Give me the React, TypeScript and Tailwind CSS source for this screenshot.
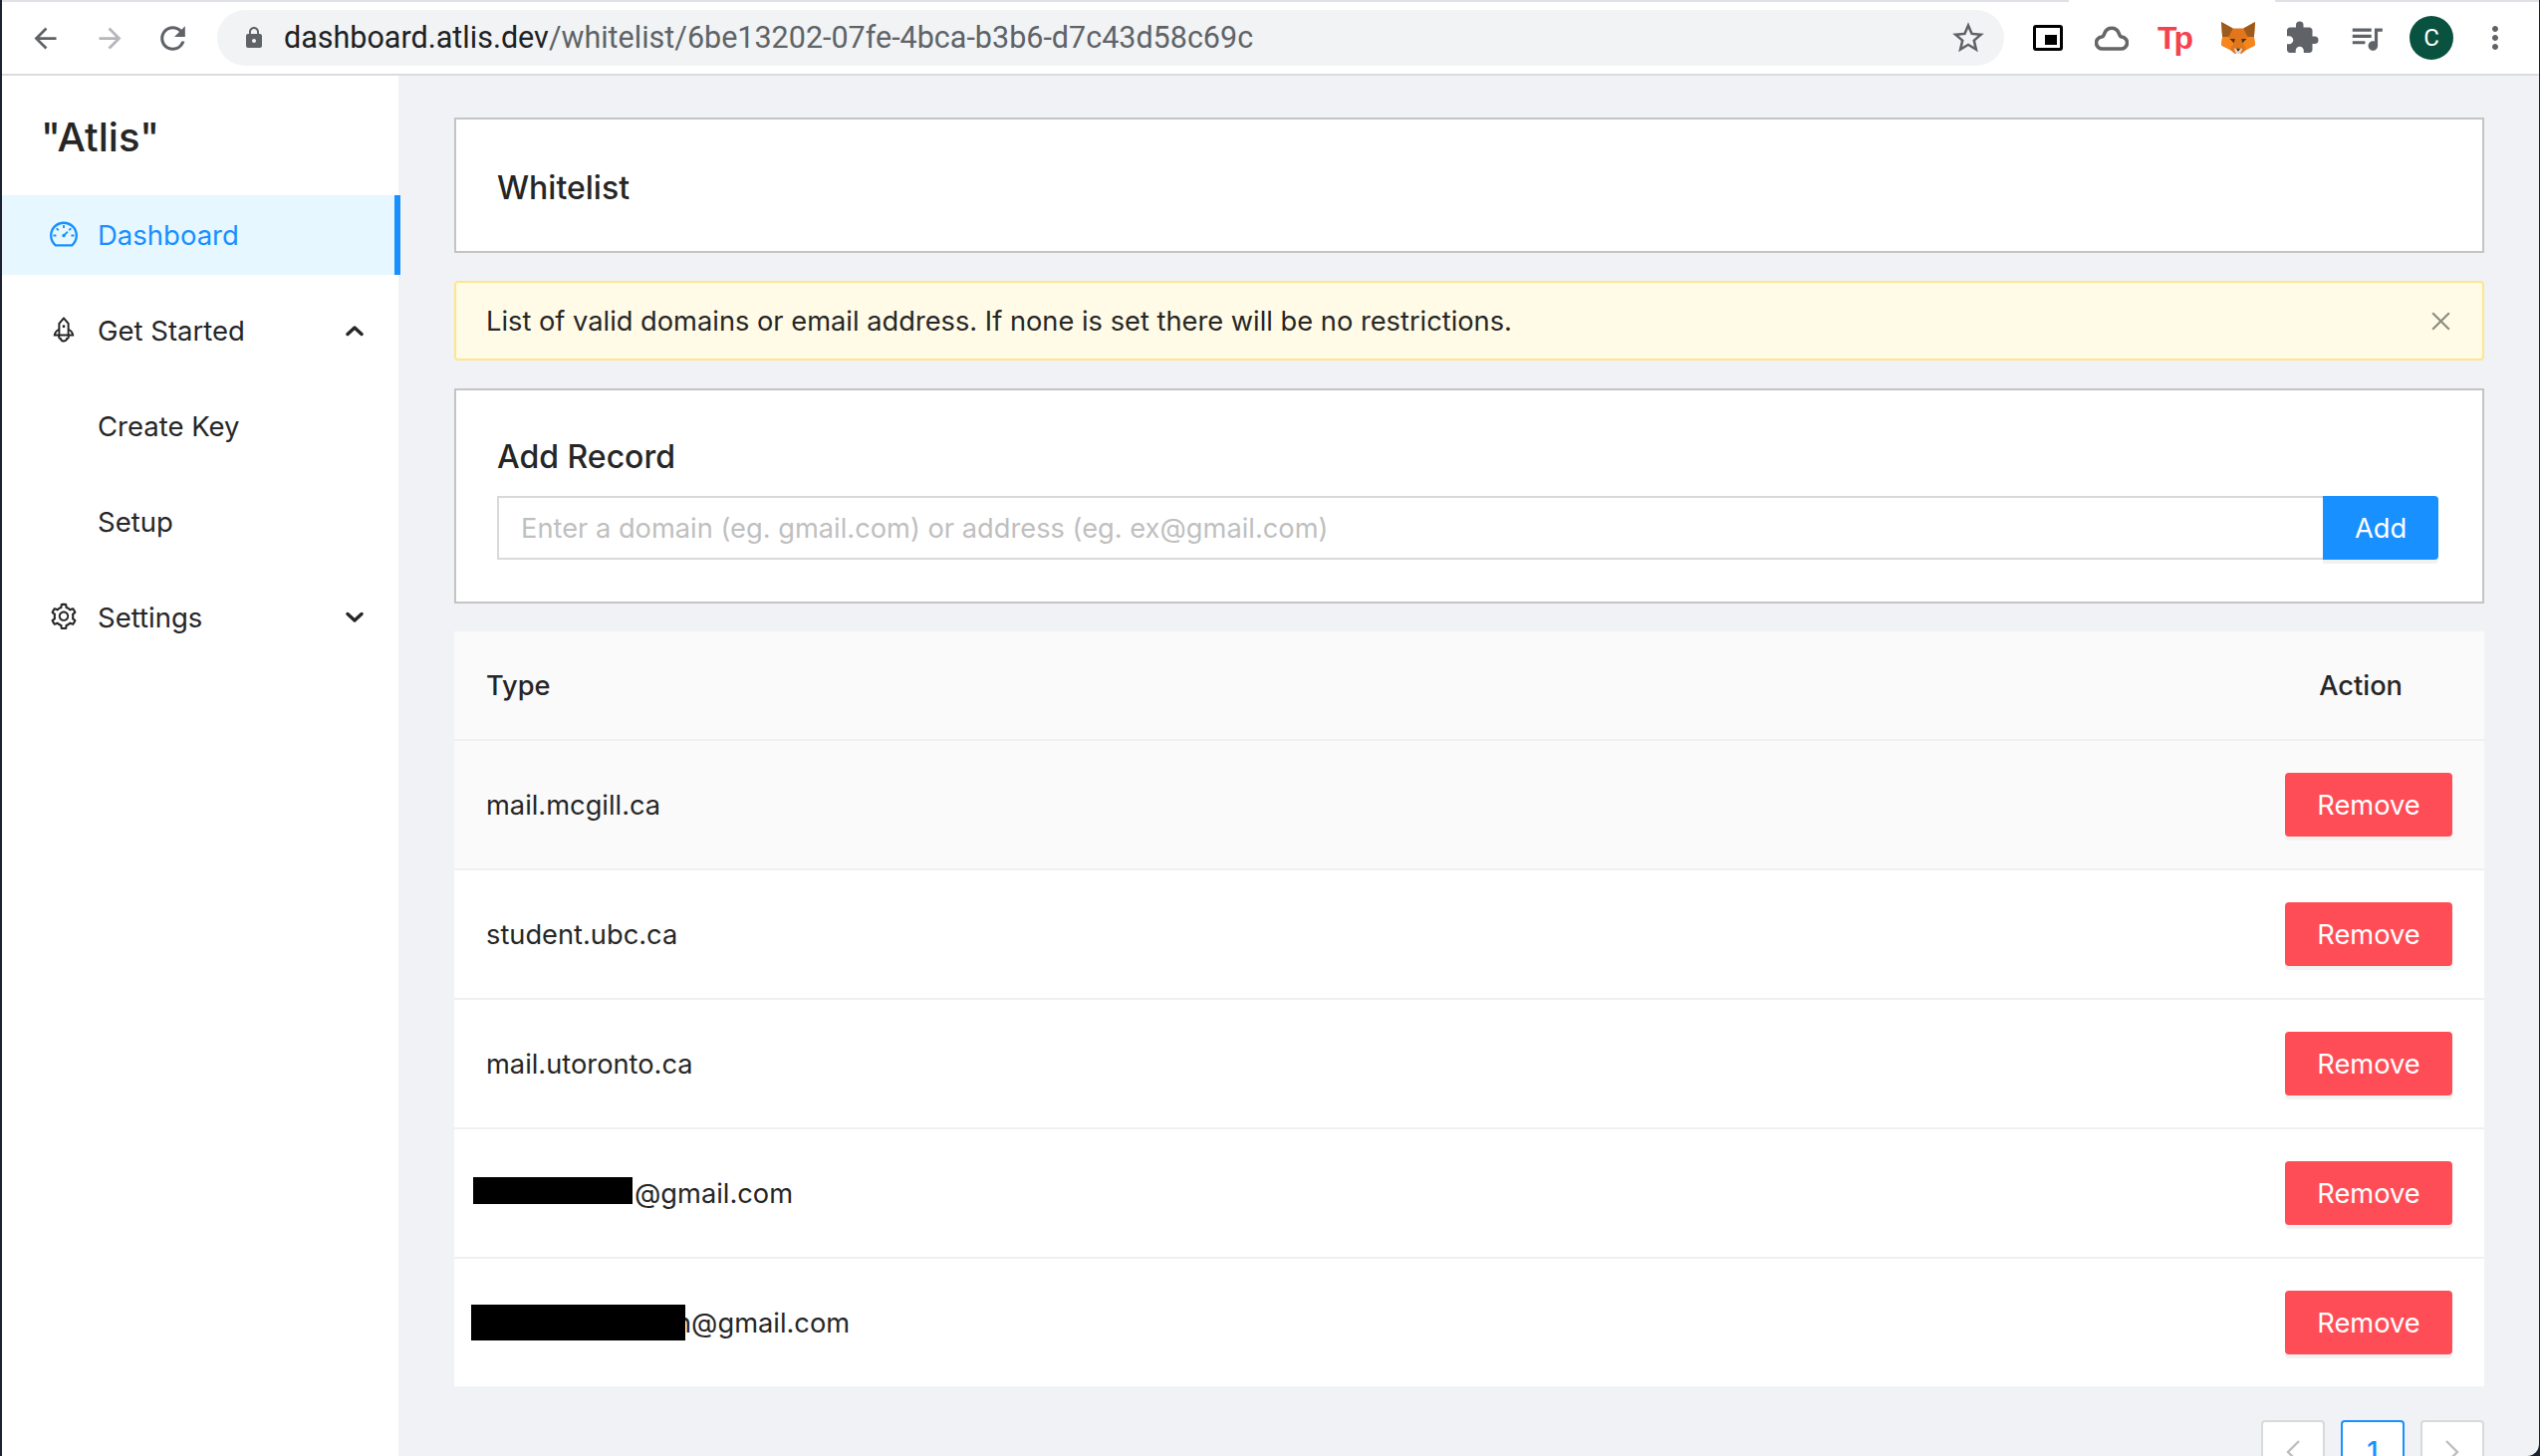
import React from "react";
import { AiOutlineDashboard, AiOutlineRocket, AiOutlineSetting, AiOutlineClose } from "react-icons/ai";
import { MdArrowBack, MdArrowForward, MdRefresh, MdLock, MdStarBorder, MdExtension, MdQueueMusic, MdMoreVert } from "react-icons/md";

const records = ["mail.mcgill.ca", "student.ubc.ca", "mail.utoronto.ca"];

function Chevron({ up }: { up?: boolean }) {
  return (
    <svg width="18" height="12" viewBox="0 0 18 12" className="ml-auto mr-[35px]" fill="none" stroke="#262626" strokeWidth="3.4" strokeLinecap="round" strokeLinejoin="round">
      <path d={up ? "M2 9.5 9 3l7 6.5" : "M2 2.5 9 9l7-6.5"} />
    </svg>
  );
}

function Fox() {
  return (
    <svg width="34" height="32" viewBox="0 0 32 30">
      <polygon points="0,0 11,6 21,6 32,0 31,14 32,22 24,26 19,30 13,30 8,26 0,22 1,14" fill="#e2761b" />
      <polygon points="0,0 11,6 7,14 1,14" fill="#9c5a1e" />
      <polygon points="32,0 21,6 25,14 31,14" fill="#9c5a1e" />
      <polygon points="1,14 7,14 12,20 8,26 0,22" fill="#f6851b" />
      <polygon points="31,14 25,14 20,20 24,26 32,22" fill="#f6851b" />
      <polygon points="8,16 13,16 12,20" fill="#4a3320" />
      <polygon points="24,16 19,16 20,20" fill="#4a3320" />
      <polygon points="12,25 20,25 18,30 14,30" fill="#e4d7c6" />
      <polygon points="14,25 18,25 16,28" fill="#2d2d2d" />
    </svg>
  );
}

function Toolbar() {
  return (
    <header className="h-[76px] shrink-0 bg-white border-b-2 border-[#dadce0] flex items-center relative pt-[2px]">
      <div className="absolute top-0 left-0 h-[2px] w-[2075px] bg-[#dee1e6]" />
      <div className="absolute top-0 right-0 h-[2px] w-[265px] bg-[#dee1e6]" />
      <div className="flex items-center w-[216px] pl-[27px] text-[#5f6368]">
        <MdArrowBack size={33} />
        <MdArrowForward size={33} className="ml-[32px] text-[#b4b6b9]" />
        <MdRefresh size={37} className="ml-[28px]" />
      </div>
      <div className="w-[1794px] h-[56px] rounded-full bg-[#f1f3f4] flex items-center pl-[25px] pr-[17px]">
        <MdLock size={24} className="text-[#5f6368]" />
        <span className="ml-[18px] text-[30.5px] text-[#5f6368] whitespace-nowrap font-['Roboto',sans-serif]">
          <span className="text-[#202124]">dashboard.atlis.dev</span>/whitelist/6be13202-07fe-4bca-b3b6-d7c43d58c69c
        </span>
        <MdStarBorder size={38} className="ml-auto text-[#5f6368]" />
      </div>
      <div className="flex items-center flex-1 pl-[29px]">
        <div className="w-[30px] h-[26px] border-[3px] border-black rounded-[3px] flex items-end justify-end p-[3px]">
          <div className="w-[12px] h-[10px] bg-black" />
        </div>
        <svg width="34" height="28" viewBox="0 0 34 28" className="ml-[32px]" fill="none" stroke="#666" strokeWidth="3.6">
          <path d="M10 25H8a6 6 0 0 1-1-12c1 0 2-1 3-4a7.500 7.500 0 0 1 14 0c1 3 2 4 3 4a6 6 0 0 1-1 12z" strokeLinejoin="round" />
        </svg>
        <span className="ml-[29px] w-[36px] text-[32px] font-black text-[#f4434f] tracking-[-3px] leading-none font-['Liberation_Sans',sans-serif]">Tp</span>
        <span className="ml-[28px] block"><Fox /></span>
        <MdExtension size={36} className="ml-[29px] text-[#5f6368]" />
        <MdQueueMusic size={38} className="ml-[28px] text-[#5f6368]" />
        <div className="ml-[24px] w-[44px] h-[44px] rounded-full bg-[#0a5240] flex items-center justify-center text-white text-[24px] font-['Roboto',sans-serif]">C</div>
        <MdMoreVert size={36} className="ml-[24px] text-[#5f6368]" />
      </div>
    </header>
  );
}

function Sidebar() {
  return (
    <aside className="w-[398px] shrink-0 bg-white">
      <div className="h-[120px] pl-[39px] flex items-center text-[40px] font-medium text-[#262626] pt-[4px]">"Atlis"</div>
      <nav className="flex flex-col text-[27.5px] text-[#262626]">
        <div className="h-[80px] w-[400px] bg-[#e6f7ff] border-r-[6px] border-[#1890ff] flex items-center pl-[46px] text-[#1890ff]">
          <AiOutlineDashboard size={32} className="-translate-y-[1px]" />
          <span className="ml-[18px] pt-[2px]">Dashboard</span>
        </div>
        <div className="h-[80px] mt-[16px] flex items-center pl-[48px]">
          <AiOutlineRocket size={30} className="-translate-y-[1px] -ml-[1px]" />
          <span className="ml-[19px] pt-[2px]">Get Started</span>
          <Chevron up />
        </div>
        <div className="h-[80px] mt-[16px] flex items-center pl-[96px] pt-[2px]">Create Key</div>
        <div className="h-[80px] mt-[16px] flex items-center pl-[96px] pt-[2px]">Setup</div>
        <div className="h-[80px] mt-[16px] flex items-center pl-[47px]">
          <AiOutlineSetting size={30} className="-translate-y-[1px]" />
          <span className="ml-[19px] pt-[2px]">Settings</span>
          <Chevron />
        </div>
      </nav>
    </aside>
  );
}

function RemoveButton() {
  return (
    <button className="ml-auto w-[168px] h-[64px] pt-[2px] rounded-[4px] bg-[#ff4d57] text-white text-[27.25px] shadow-[0_4px_0_#f2f2f2]">Remove</button>
  );
}

function Row({ children, hover }: { children: React.ReactNode; hover?: boolean }) {
  return (
    <div className={`h-[130px] last:h-[128px] flex items-center pl-[32px] pr-[32px] border-b-2 border-[#f0f0f0] last:border-b-0 text-[27.25px] text-[#262626] ${hover ? "bg-[#fafafa]" : ""}`}>
      {children}
    </div>
  );
}

function PageArrow({ left }: { left?: boolean }) {
  return (
    <div className="w-[64px] h-[64px] bg-white border-2 border-[#d9d9d9] rounded-[4px] flex items-center justify-center">
      <svg width="14" height="24" viewBox="0 0 14 24" fill="none" stroke="#bfbfbf" strokeWidth="2.4">
        <path d={left ? "M13 1 2 12l11 11" : "M1 1l11 11L1 23"} />
      </svg>
    </div>
  );
}

export default function App() {
  return (
    <div className="w-[2550px] h-[1462px] overflow-hidden bg-[#1b2233] font-['Inter',sans-serif]">
      <div className="h-full ml-[2px] mr-[1px] rounded-br-[12px] overflow-hidden flex flex-col bg-[#f0f2f5]">
        <Toolbar />
        <div className="flex flex-1 min-h-0">
          <Sidebar />
          <main className="flex-1 pl-[56px] pr-[55px] pt-[42px] flex flex-col">
            <section className="h-[136px] shrink-0 bg-white border-2 border-[#c4c4c4] flex items-center pl-[41px] pt-[6px] text-[32px] font-medium text-[#262626]">Whitelist</section>
            <div className="mt-[28px] h-[80px] shrink-0 bg-[#fffbe6] border-2 border-[#ffe58f] rounded-[4px] flex items-center pl-[30px] pr-[32px] text-[27.25px] text-[#262626]">
              <span className="pt-[2px]">List of valid domains or email address. If none is set there will be no restrictions.</span>
              <AiOutlineClose size={27} className="ml-auto -mr-[4px] text-[#8c8c80]" />
            </div>
            <section className="mt-[28px] h-[216px] shrink-0 bg-white border-2 border-[#c4c4c4] pl-[41px] pr-[44px] pt-[47px]">
              <h2 className="text-[32px] leading-[40px] font-medium text-[#262626]">Add Record</h2>
              <div className="mt-[19px] flex h-[64px]">
                <input readOnly placeholder="Enter a domain (eg. gmail.com) or address (eg. ex@gmail.com)" className="flex-1 min-w-0 border-2 border-r-0 border-[#d9d9d9] pl-[22px] pt-[2px] text-[27.25px] placeholder:text-[#bfbfbf] outline-none" />
                <button className="w-[116px] pt-[2px] rounded-r-[4px] bg-[#1890ff] text-white text-[27.25px] shadow-[0_4px_0_#f2f2f2]">Add</button>
              </div>
            </section>
            <section className="mt-[28px] shrink-0 bg-white">
              <div className="h-[110px] flex items-center pl-[32px] bg-[#fafafa] border-b-2 border-[#f0f0f0] text-[27.25px] font-medium text-[#262626]">
                <span className="pt-[2px]">Type</span>
                <span className="ml-auto mr-[82px] pt-[2px]">Action</span>
              </div>
              {records.map((record, i) => (
                <Row key={record} hover={i === 0}>
                  <span className="pt-[2px]">{record}</span>
                  <RemoveButton />
                </Row>
              ))}
              <Row>
                <span className="-ml-[13px] mr-[2px] w-[160px] h-[27px] bg-black -translate-y-[3px]" />
                <span className="pt-[2px]">@gmail.com</span>
                <RemoveButton />
              </Row>
              <Row>
                <span className="-ml-[15px] w-[215px] h-[36px] bg-black z-10" />
                <span className="-ml-[10px] pt-[2px]">n@gmail.com</span>
                <RemoveButton />
              </Row>
            </section>
            <nav className="mt-[34px] shrink-0 flex justify-end gap-[16px] text-[27.25px]">
              <PageArrow left />
              <div className="w-[64px] h-[64px] bg-white border-2 border-[#1890ff] rounded-[4px] flex items-center justify-center font-medium text-[#1890ff]">1</div>
              <PageArrow />
            </nav>
          </main>
        </div>
      </div>
    </div>
  );
}
